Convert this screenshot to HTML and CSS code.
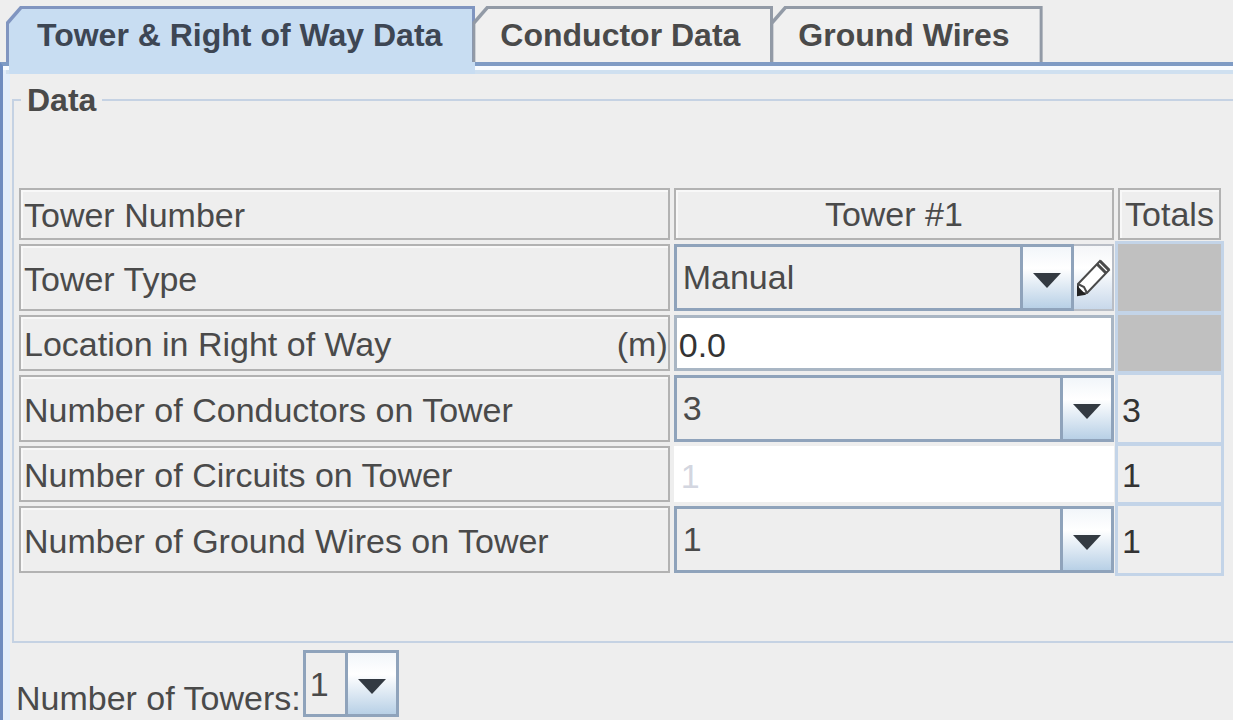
FILE: index.html
```html
<!DOCTYPE html>
<html lang="en">
<head>
  <meta charset="UTF-8">
  <title>Tower &amp; Right of Way Data</title>
  <meta name="viewport" content="width=device-width, initial-scale=1.0">
  <link rel="stylesheet" href="styles.css">
</head>
<body>

  <div class="tabs" role="tablist">
    <button type="button" class="tab active" role="tab" aria-selected="true"><span>Tower &amp; Right of Way Data</span></button>
    <button type="button" class="tab" role="tab" aria-selected="false"><span>Conductor Data</span></button>
    <button type="button" class="tab" role="tab" aria-selected="false"><span>Ground Wires</span></button>
  </div>

  <form class="panel">
    <fieldset class="group">
      <legend>Data</legend>

      <table class="grid">
        <colgroup>
          <col class="col-name">
          <col>
          <col class="col-total">
        </colgroup>
        <tr class="row-head">
          <th class="box name" scope="row">Tower Number</th>
          <th class="box" scope="col">Tower #1</th>
          <th class="box" scope="col">Totals</th>
        </tr>
        <tr class="row-combo">
          <th class="box name" scope="row"><label for="type">Tower Type</label></th>
          <td>
            <div class="type">
              <select id="type" class="combo">
                <option>Manual</option>
              </select>
              <button type="button" class="edit" aria-label="Edit tower">
                <svg viewBox="0 0 36 38" width="36" height="38" fill="none" stroke="#4a4a4a" stroke-width="2">
                  <path d="M3 25 L25 2 L34 11 L12 34 L3 35 Z" fill="#fff"/>
                  <path d="M22 5 L31 14 M25 2 L34 11" stroke-width="3"/>
                  <path d="M3 25 L9 28 L12 34"/>
                  <path d="M3 29 L9 35 L3 36 Z" fill="#222" stroke="#222"/>
                </svg>
              </button>
            </div>
          </td>
          <td class="total off"></td>
        </tr>
        <tr class="row-text">
          <th class="box name" scope="row"><label class="split" for="location">Location in Right of Way <span>(m)</span></label></th>
          <td><input type="text" id="location" class="field" value="0.0"></td>
          <td class="total off"></td>
        </tr>
        <tr class="row-combo">
          <th class="box name" scope="row"><label for="conductors">Number of Conductors on Tower</label></th>
          <td>
            <select id="conductors" class="combo">
              <option>3</option>
            </select>
          </td>
          <td class="total">3</td>
        </tr>
        <tr class="row-text">
          <th class="box name" scope="row"><label for="circuits">Number of Circuits on Tower</label></th>
          <td><input type="text" id="circuits" class="field plain" value="1" disabled></td>
          <td class="total">1</td>
        </tr>
        <tr class="row-combo">
          <th class="box name" scope="row"><label for="wires">Number of Ground Wires on Tower</label></th>
          <td>
            <select id="wires" class="combo">
              <option>1</option>
            </select>
          </td>
          <td class="total">1</td>
        </tr>
      </table>
    </fieldset>

    <div class="towers">
      <label for="towers">Number of Towers:</label>
      <select id="towers" class="combo small">
        <option>1</option>
      </select>
    </div>
  </form>

</body>
</html>
```
FILE: styles.css
```css
* {
  box-sizing: border-box;
}
body {
  margin: 0;
  height: 100vh;
  padding-top: 6px;
  display: flex;
  flex-direction: column;
  overflow: hidden;
  background: #eeeeee;
  color: #4a4a4a;
  font-family: "Liberation Sans", Arial, sans-serif;
  font-size: 34px;
}
button, input, select {
  font: inherit;
  color: inherit;
  margin: 0;
}

/* tabs */
.tabs {
  display: flex;
  padding-left: 6px;
}
.tab {
  position: relative;
  height: 56px;
  margin-right: -3px;
  padding: 2px 33px 0 28px;
  border: none;
  background: none;
  font-size: 32px;
  font-weight: bold;
  white-space: nowrap;
}
.tab::before,
.tab span::before {
  content: "";
  position: absolute;
  z-index: -1;
  inset: 0;
  background: #929aa6;
  clip-path: polygon(0 16px, 14px 0, 100% 0, 100% 100%, 0 100%);
}
.tab span::before {
  inset: 3px 3px 0 3px;
  background: #f0f0f0;
  clip-path: polygon(0 15px, 13px 0, 100% 0, 100% 100%, 0 100%);
}
.tab.active {
  padding-left: 31px;
  color: #3d4654;
}
.tab.active::before {
  background: #8095c0;
}
.tab.active span::before {
  background: #c8ddf2;
}
/* joins the open tab to the panel below */
.tab.active::after {
  content: "";
  position: absolute;
  top: 100%;
  left: 3px;
  right: 0;
  height: 12px;
  background: #c8ddf2;
}

/* panel */
.panel {
  flex: 1;
  border-top: 4px solid #7f9bc4;
  border-left: 3px solid #6d8cc0;
  box-shadow: inset 0 4px #f8fbff, inset 3px 0 #e2eefb, inset 0 8px #cfe0f0, inset 7px 0 #e2eefb;
  padding: 14px 0 0 9px;
}
.group {
  margin: 0;
  padding: 64px 8px 64px 1px;
  border: 2px solid #c5d2e3;
  border-right: none;
  min-width: 0;
}
legend {
  margin-left: 6px;
  padding: 0 6px;
  line-height: 40px;
  font-size: 32px;
  font-weight: bold;
}

/* data grid */
.grid {
  width: 100%;
  table-layout: fixed;
  border-collapse: separate;
  border-spacing: 4px;
}
.col-name {
  width: 54.5%;
}
.col-total {
  width: 103px;
}
.grid th,
.grid td {
  padding: 0;
  font-weight: normal;
  line-height: 40px;
  white-space: nowrap;
}
.grid .box {
  border: 2px solid #b2b2b2;
  box-shadow: inset 2px 2px #f8f8f8;
}
.grid .name {
  padding: 2px 0 0 3px;
  text-align: left;
}
.row-head {
  height: 52px;
}
.row-combo {
  height: 67px;
}
.row-text {
  height: 56px;
}
.split {
  display: flex;
  justify-content: space-between;
}
.grid .total {
  padding: 2px 0 0 4px;
  color: #333;
  outline: 3px solid #c3d4e8;
}
.grid .off {
  background: #c0c0c0;
}

/* controls */
.combo {
  display: block;
  width: 100%;
  height: 67px;
  padding: 0 60px 2px 6px;
  appearance: none;
  border: 3px solid #8fa3bb;
  border-radius: 0;
  background:
    url("data:image/svg+xml,%3Csvg xmlns='http://www.w3.org/2000/svg' width='28' height='15'%3E%3Cpath d='M0 0h28L14 15z' fill='%23333a42'/%3E%3C/svg%3E") no-repeat right 10px top 26px,
    linear-gradient(#8fa3bb, #8fa3bb) no-repeat right 48px top / 3px 100%,
    linear-gradient(#f2f6fa, #ffffff 35%, #b8d0e6) no-repeat right top / 48px 100%,
    #eeeeee;
}
.type {
  display: flex;
}
.type .combo {
  flex: 1;
}
.edit {
  width: 40px;
  height: 67px;
  padding: 0;
  display: flex;
  align-items: center;
  justify-content: center;
  border: 2px solid #b9bec6;
  border-left: none;
  background: linear-gradient(#f4f6f8, #ffffff 35%, #c8d8ea);
}
.field {
  display: block;
  width: 100%;
  height: 56px;
  padding: 4px 2px 0;
  border: 3px solid #a9b6c4;
  border-radius: 0;
  background: #fff;
  color: #333;
}
.plain {
  border-color: #fff;
  padding-left: 4px;
  color: #d3d6e0;
}

.towers {
  display: flex;
  align-items: flex-end;
  gap: 2px;
  margin-top: 7px;
  padding-left: 4px;
}
.towers label {
  line-height: 38px;
}
.small {
  width: 96px;
  padding: 0 50px 0 4px;
}
```
